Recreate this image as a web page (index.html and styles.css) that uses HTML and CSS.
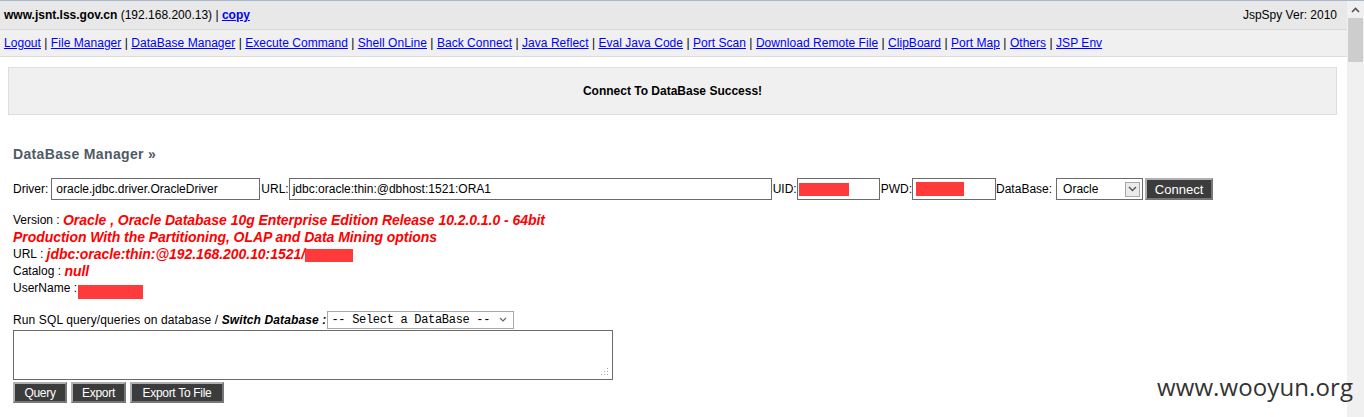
FILE: index.html
```html
<!DOCTYPE html>
<html>
<head>
<meta charset="utf-8">
<link rel="stylesheet" href="styles.css">
</head>
<body>
<div class="page">
  <div class="main">
    <div class="head">
      <div class="host"><b>www.jsnt.lss.gov.cn</b> (192.168.200.13) | <a href="#" class="copy">copy</a></div>
      <div class="ver">JspSpy Ver: 2010</div>
    </div>
    <div class="nav">
      <a href="#">Logout</a> | <a href="#">File Manager</a> | <a href="#">DataBase Manager</a> | <a href="#">Execute Command</a> | <a href="#">Shell OnLine</a> | <a href="#">Back Connect</a> | <a href="#">Java Reflect</a> | <a href="#">Eval Java Code</a> | <a href="#">Port Scan</a> | <a href="#">Download Remote File</a> | <a href="#">ClipBoard</a> | <a href="#">Port Map</a> | <a href="#">Others</a> | <a href="#">JSP Env</a>
    </div>
    <div class="content">
      <div class="msg">Connect To DataBase Success!</div>
      <h2 class="title">DataBase Manager &raquo;</h2>
      <div class="form">
        <label>Driver:</label><span class="inp w-driver">oracle.jdbc.driver.OracleDriver</span><label class="tight">URL:</label><span class="inp w-url">jdbc:oracle:thin:@dbhost:1521:ORA1</span><label class="tight">UID:</label><span class="inp w-uid"><span class="red r-uid"></span></span><label class="tight">PWD:</label><span class="inp w-pwd"><span class="red r-pwd"></span></span><label>DataBase:</label><span class="sel"><span class="sel-text">Oracle</span><span class="sel-btn"><svg width="9" height="6" viewBox="0 0 9 6"><path d="M1 1 L4.5 4.5 L8 1" fill="none" stroke="#555" stroke-width="1.4"/></svg></span></span><span class="btn btn-connect">Connect</span>
      </div>
      <div class="info">
        <div class="line">Version : <em>Oracle , Oracle Database 10g Enterprise Edition Release 10.2.0.1.0 - 64bit</em></div>
        <div class="line"><em>Production With the Partitioning, OLAP and Data Mining options</em></div>
        <div class="line">URL : <em>jdbc:oracle:thin:@192.168.200.10:1521/</em><span class="red r-url"></span></div>
        <div class="line">Catalog : <em>null</em></div>
        <div class="line">UserName :<span class="red r-user"></span></div>
      </div>
      <div class="sql">
        <div class="sqlhead">Run SQL query/queries on database / <b><i>Switch Database :</i></b> <span class="sel2">-- Select a DataBase --<svg class="chev" width="8" height="6" viewBox="0 0 8 6"><path d="M1 1 L4 4 L7 1" fill="none" stroke="#666" stroke-width="1.2"/></svg></span></div>
        <div class="ta"><svg class="grip" width="9" height="9" viewBox="0 0 9 9"><g fill="#aaa"><rect x="7" y="1" width="1" height="1"/><rect x="4" y="4" width="1" height="1"/><rect x="7" y="4" width="1" height="1"/><rect x="1" y="7" width="1" height="1"/><rect x="4" y="7" width="1" height="1"/><rect x="7" y="7" width="1" height="1"/></g></svg></div>
        <div class="btns"><span class="btn b-q">Query</span><span class="btn b-e">Export</span><span class="btn b-f">Export To File</span></div>
      </div>
    </div>
  </div>
  <div class="scroll">
    <div class="arrow"><svg width="9" height="6" viewBox="0 0 9 6"><path d="M1 5 L4.5 1.5 L8 5" fill="none" stroke="#555" stroke-width="1.6"/></svg></div>
    <div class="thumb"></div>
  </div>
  <div class="mark">www.wooyun.org</div>
</div>
</body>
</html>
```
FILE: styles.css
```css
html, body { margin: 0; padding: 0; }
body {
  width: 1364px; height: 417px; overflow: hidden;
  font-family: "Liberation Sans", Arial, sans-serif; font-size: 12px; color: #000;
  background: #fff;
}
.page { display: flex; height: 417px; position: relative; border-top: 1px solid #a9b8cc; box-sizing: border-box; }
.main { width: 1347px; flex: none; }
.scroll { width: 17px; flex: none; background: #f0f0f0; display: flex; flex-direction: column; align-items: stretch; }
.arrow { height: 17px; display: flex; align-items: center; justify-content: center; }
.thumb { height: 44px; background: #cdcdcd; margin: 0 1px; }
.head {
  height: 28px; background: #e8e8e8; border-bottom: 1px solid #d8d8d8;
  display: flex; justify-content: space-between; align-items: center;
  padding: 0 10px 0 4px;
}
.head a { color: #00f; font-weight: bold; }
.nav { height: 26px; background: #f0f0f0; border-bottom: 1px solid #dcdcdc; padding: 0 0 0 4px; display: flex; align-items: center; white-space: pre; letter-spacing: 0.04px; }
.nav a { color: #00f; }
.content { padding: 10px 10px 0 8px; }
.msg {
  height: 46px; background: #f0f0f0; border: 1px solid #ddd;
  display: flex; align-items: center; justify-content: center;
  font-weight: bold;
}
.title { margin: 30px 0 0 5px; font-size: 14px; font-weight: bold; color: #505a66; height: 18px; line-height: 18px; letter-spacing: 0.35px; }
.form { display: flex; align-items: center; margin: 15px 0 0 5px; height: 22px; }
.form label { margin-right: 3px; }
.form label.tight { margin-right: 0; margin-left: 1px; }
.inp {
  height: 22px; box-sizing: border-box; border: 1px solid #6b6b6b; background: #fff;
  display: flex; align-items: center; padding-left: 4px; font-size: 12px; position: relative;
}
.w-driver { width: 209px; }
.w-url { width: 483px; padding-left: 3px; }
.w-uid { width: 83px; padding-left: 1px; }
.w-pwd { width: 84px; padding-left: 3px; }
.red { display: inline-block; background: #fe3a3a; }
.r-uid { width: 50px; height: 13px; }
.r-pwd { width: 48px; height: 14px; }
.sel {
  width: 87px; height: 22px; box-sizing: border-box; border: 1px solid #6b6b6b; background: #fff;
  display: flex; align-items: center; justify-content: space-between; padding: 0 2px 0 6px; margin-left: 1px;
}
.sel-btn { width: 15px; height: 15px; box-sizing: border-box; border: 1px solid #a8a8a8; background: #eaeaea; display: flex; align-items: center; justify-content: center; }
.btn {
  display: inline-flex; align-items: center; justify-content: center;
  background: #3c3c3c; color: #fff; border: 2px solid #9a9a9a; box-sizing: border-box;
  border-color: #b0b0b0 #777 #777 #b0b0b0;
}
.btn-connect { width: 68px; height: 22px; margin-left: 2px; font-size: 13px; }
.info { margin: 12px 0 0 5px; }
.line { height: 17px; line-height: 17px; display: flex; align-items: center; white-space: pre; }
.line em { color: #f00; font-weight: bold; font-style: italic; font-size: 14px; letter-spacing: -0.05px; }
.r-url { width: 48px; height: 13px; margin-top: 2px; }
.r-user { width: 65px; height: 14px; margin-left: 1px; margin-top: 6px; }
.sql { margin: 14px 0 0 5px; }
.sqlhead { display: flex; align-items: center; height: 18px; font-size: 12px; letter-spacing: 0.12px; white-space: pre; }
.sel2 {
  display: inline-flex; align-items: center; justify-content: space-between; width: 187px; height: 18px; box-sizing: border-box;
  border: 1px solid #a8a8a8; font-family: "Liberation Mono", monospace; font-size: 12px; letter-spacing: -0.3px; padding: 0 6px 0 3px; margin-left: 1px;
}
.ta { width: 600px; height: 50px; box-sizing: border-box; border: 1px solid #6b6b6b; margin-top: 1px; position: relative; }
.grip { position: absolute; right: 3px; bottom: 3px; }
.btns { display: flex; gap: 4px; margin-top: 2px; }
.btns .btn { height: 21px; font-size: 12px; letter-spacing: -0.3px; }
.b-q { width: 54px; }
.b-e { width: 55px; }
.b-f { width: 94px; }
.mark { position: absolute; left: 1157px; top: 369px; font-family: "Open Sans", sans-serif; font-size: 24px; color: #333; letter-spacing: 0.1px; }
```
